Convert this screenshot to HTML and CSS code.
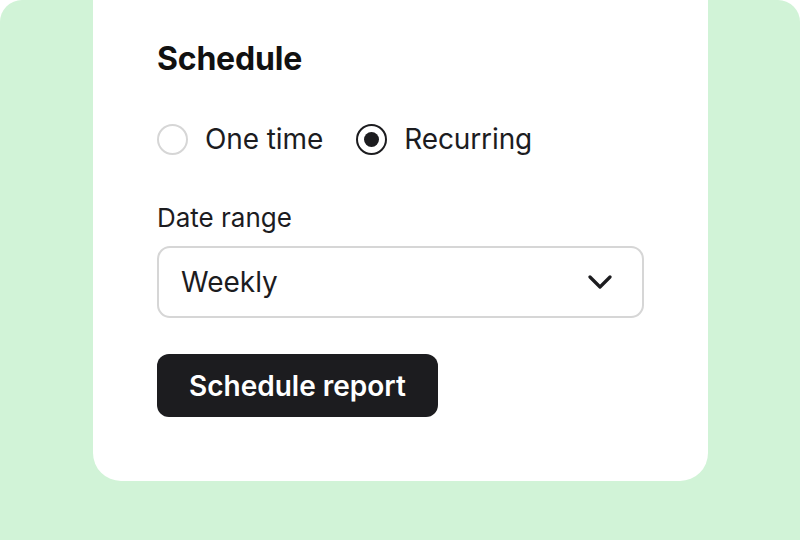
FILE: index.html
```html
<!DOCTYPE html>
<html lang="en">
<head>
    <meta charset="UTF-8">
    <meta name="viewport" content="width=device-width, initial-scale=1.0">
    <title>Schedule report</title>
    <link rel="stylesheet" href="styles.css">
</head>
<body>
    <div class="stage">
        <div class="card">
            <h2>Schedule</h2>

            <div class="radio-row">
                <label class="radio">
                    <span class="dot"></span>
                    One time
                </label>
                <label class="radio checked">
                    <span class="dot"></span>
                    Recurring
                </label>
            </div>

            <div class="form-group">
                <div class="label">Date range</div>
                <div class="select">
                    <span>Weekly</span>
                    <svg width="24" height="16" viewBox="0 0 24 16" fill="none">
                        <path d="M2 3 L12 13 L22 3" stroke="#1c1c1f" stroke-width="3.2" stroke-linecap="round" stroke-linejoin="round"/>
                    </svg>
                </div>
            </div>

            <button>Schedule report</button>
        </div>
    </div>
</body>
</html>
```

FILE: styles.css
```css
:root {
    --green: #d1f3d7;
    --dark: #1c1c1f;
    --border: #d6d6d6;
}

body {
    margin: 0;
    background: #fff;
    font-family: Inter, "Noto Sans", sans-serif;
    color: var(--dark);
}

.stage {
    background: var(--green);
    border-radius: 22px 22px 0 0;
    height: 540px;
    overflow: hidden;
}

.card {
    background: #fff;
    margin: 0 92px 0 93px;
    height: 481px;
    box-sizing: border-box;
    padding: 41px 64px 0 64px;
    border-radius: 0 0 28px 28px;
}

h2 {
    margin: 0;
    font-size: 32px;
    font-weight: 650;
    line-height: 36px;
    letter-spacing: -0.2px;
    color: #111;
}

.radio-row {
    display: flex;
    gap: 33px;
    margin-top: 46px;
}

.radio {
    display: flex;
    align-items: center;
    gap: 17px;
    font-size: 28px;
    line-height: 32px;
    letter-spacing: -0.1px;
}

.dot {
    width: 31px;
    height: 31px;
    box-sizing: border-box;
    border: 2px solid var(--border);
    border-radius: 50%;
    display: flex;
    align-items: center;
    justify-content: center;
}

.checked .dot {
    border: 2.5px solid var(--dark);
}

.checked .dot::after {
    content: "";
    width: 15px;
    height: 15px;
    border-radius: 50%;
    background: var(--dark);
}

.form-group {
    margin-top: 47px;
}

.label {
    font-size: 26px;
    line-height: 32px;
}

.select {
    margin-top: 12px;
    height: 72px;
    box-sizing: border-box;
    border: 2px solid var(--border);
    border-radius: 13px;
    display: flex;
    align-items: center;
    justify-content: space-between;
    padding: 0 30px 0 22px;
    font-size: 28px;
}

button {
    margin-top: 36px;
    background: var(--dark);
    color: #fff;
    border: none;
    border-radius: 12px;
    height: 63px;
    padding: 0 32px;
    font-family: inherit;
    font-size: 28px;
    font-weight: 600;
    cursor: pointer;
}
```
